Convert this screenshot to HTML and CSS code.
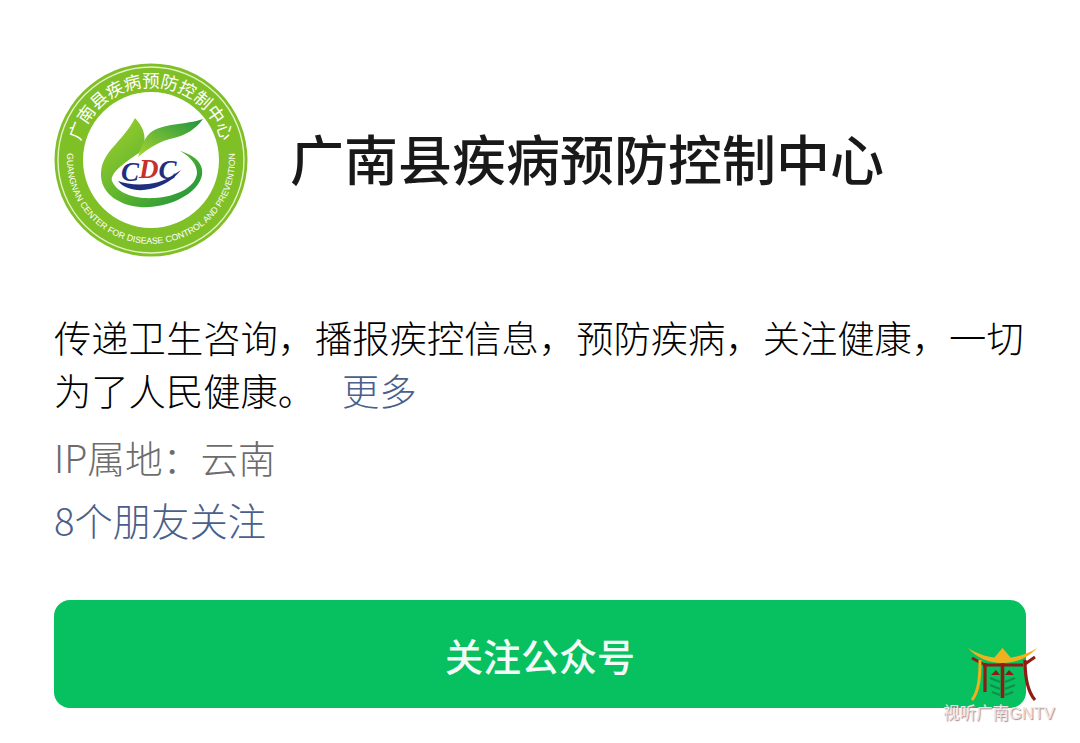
FILE: index.html
```html
<!DOCTYPE html>
<html lang="zh">
<head>
<meta charset="utf-8">
<title>广南县疾病预防控制中心</title>
<link rel="stylesheet" href="styles.css">
</head>
<body>
<main class="page">
  <header class="head">
    <svg class="logo" viewBox="0 0 194 194" xmlns="http://www.w3.org/2000/svg">
      <defs>
        <linearGradient id="lg1" x1="0" y1="0" x2="1" y2="1">
          <stop offset="0" stop-color="#a6d22c"/>
          <stop offset="0.5" stop-color="#62b62e"/>
          <stop offset="1" stop-color="#17913c"/>
        </linearGradient>
        <linearGradient id="lg2" x1="0" y1="1" x2="1" y2="0">
          <stop offset="0" stop-color="#a8d42e"/>
          <stop offset="1" stop-color="#1d9440"/>
        </linearGradient>
        <path id="arcTop" d="M 24 97 a 73 73 0 0 1 146 0"/>
        <path id="arcBot" d="M 13.6 86.8 A 84 84 0 1 0 180.4 86.8"/>
      </defs>
      <circle cx="97" cy="97" r="96.5" fill="#7fc026"/>
      <circle cx="97" cy="97" r="93" fill="none" stroke="#e4f2c4" stroke-width="1.4"/>
      <circle cx="97" cy="97" r="68" fill="#fff"/>
      <text class="logo-cn"><textPath href="#arcTop" startOffset="50%" text-anchor="middle">广南县疾病预防控制中心</textPath></text>
      <text class="logo-en"><textPath href="#arcBot" startOffset="50%" text-anchor="middle">GUANGNAN CENTER FOR DISEASE CONTROL AND PREVENTION</textPath></text>
      <path d="M81 55 C93 68 93 80 85 90 C70 100 56 110 58 118 C64 132 84 136 100 135 C122 134 142 124 143 110 C143 102 137 94 126 88 C140 92 150 100 148 112 C144 132 112 146 86 144 C62 142 46 128 47 110 C48 88 68 80 81 55 Z" fill="url(#lg1)"/>
      <path d="M149 56 C132 62 108 60 96 70 C90 76 88 82 84 94 C96 84 106 78 120 75 C132 72 142 66 149 56 Z" fill="url(#lg2)"/>
      <path d="M64 118 C70 126 84 129 96 126 C110 123 120 116 127 107 C118 113 108 120 94 121 C82 122 72 121 64 118 Z" fill="#1e2f80"/>
      <text class="logo-cdc" x="67" y="118">C<tspan class="logo-d" dy="-3">D</tspan><tspan dy="1">C</tspan></text>
    </svg>
    <h1 class="title">广南县疾病预防控制中心</h1>
  </header>

  <p class="desc">传递卫生咨询，播报疾控信息，预防疾病，关注健康，一切为了人民健康。<a class="more">更多</a></p>
  <p class="ip">IP属地：云南</p>
  <p class="friends">8个朋友关注</p>

  <button class="follow" type="button">关注公众号</button>
</main>

<aside class="mark">
  <svg class="mark-icon" viewBox="0 0 72 56" xmlns="http://www.w3.org/2000/svg">
    <path d="M5 11 L16 17 M68 10 L58 17 M16 18 L56 18" fill="none" stroke="#8d1c14" stroke-width="3"/>
    <path d="M18 16 L18 45 M58 13 C58 30 60 44 68 53" fill="none" stroke="#8d1c14" stroke-width="3.2"/>
    <path d="M35.5 16 L35.5 51" fill="none" stroke="#8d1c14" stroke-width="3.6"/>
    <path d="M23 31 L33 35 M48 31 L38 35 M23 38 L33 42 M48 38 L38 42 M25 45 L33 48 M46 45 L38 48" fill="none" stroke="#0f8f4a" stroke-width="2.4"/>
    <path d="M24 28 L29 23 L33 28 Z M47 28 L42 23 L38 28 Z" fill="#8d1c14"/>
    <path d="M13 13 C13 30 12 44 5 53" fill="none" stroke="#eeb01c" stroke-width="3"/>
    <path d="M1 1 C12 8 24 11 35.5 11 C47 11 59 8 70 1 C62 10 50 16 35.5 16 C21 16 9 10 1 1 Z" fill="#f2b01e"/>
    <path d="M27 11 L35.5 1 L44 11 Z" fill="#f2b01e"/>
  </svg>
  <span class="mark-text">视听广南GNTV</span>
</aside>
</body>
</html>
```
FILE: styles.css
```css
* { box-sizing: border-box; }

html, body {
  margin: 0;
  height: 100%;
  background: #fff;
  overflow: hidden;
}

body {
  position: relative;
  font-family: "Noto Sans CJK SC", "Noto Sans", sans-serif;
  color: #1a1a1a;
}

.page {
  padding: 63px 54px 0;
}

.head {
  display: flex;
  align-items: center;
  gap: 42px;
}

.logo {
  width: 194px;
  height: 194px;
  flex: none;
}

.logo-cn {
  font-size: 17.4px;
  fill: #fff;
}

.logo-en {
  font-family: "Liberation Sans", sans-serif;
  font-size: 8.8px;
  fill: #fff;
}

.logo-cdc {
  font-family: "Liberation Serif", serif;
  font-weight: 700;
  font-style: italic;
  font-size: 27px;
  fill: #1e2f80;
}

.logo-d {
  fill: #c8302b;
}

.title {
  margin: 0;
  font-size: 54px;
  font-weight: 500;
  line-height: 1.2;
  color: #191919;
  position: relative;
  top: -2px;
}

.desc {
  margin: 54px 0 0;
  font-size: 37.3px;
  font-weight: 300;
  line-height: 53px;
  color: #000;
}

.more {
  margin-left: 27px;
  color: #4a5f8c;
}

.ip {
  margin: 13px 0 0;
  font-size: 37.7px;
  font-weight: 300;
  line-height: 53px;
  color: #6c6c6c;
}

.friends {
  margin: 10px 0 0;
  font-size: 38.3px;
  font-weight: 300;
  line-height: 53px;
  color: #4a5f8c;
}

.follow {
  display: block;
  width: 100%;
  height: 108px;
  margin-top: 54px;
  border: 0;
  border-radius: 16px;
  background: #07c160;
  color: #f4fbf7;
  font-family: inherit;
  font-size: 38px;
  font-weight: 500;
}

.mark {
  position: absolute;
  left: 943px;
  top: 647px;
  display: flex;
  flex-direction: column;
  align-items: flex-start;
}

.mark-icon {
  width: 72px;
  height: 56px;
  margin-left: 24px;
}

.mark-text {
  font-family: "Liberation Sans", "Noto Sans CJK SC", sans-serif;
  font-size: 16.5px;
  line-height: 20px;
  white-space: nowrap;
  color: #f1e6e6;
  text-shadow: 1px 1px 1px #a98686;
}
```
